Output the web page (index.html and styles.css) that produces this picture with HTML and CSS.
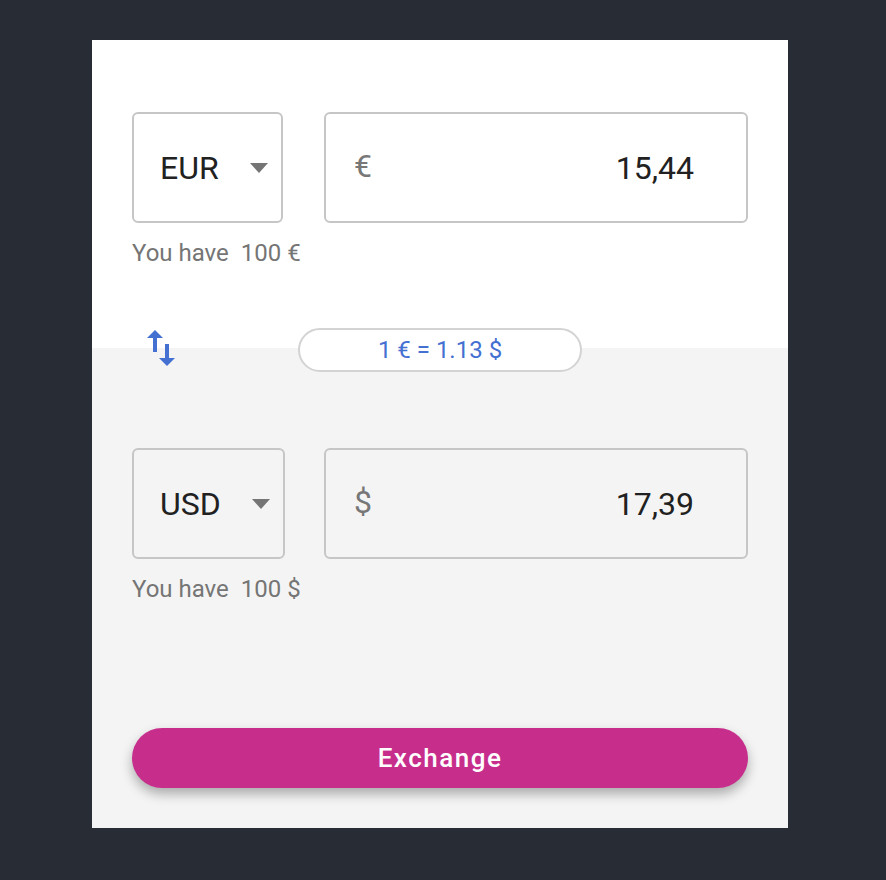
FILE: index.html
```html
<!DOCTYPE html>
<html>
<head>
<meta charset="utf-8">
<link rel="stylesheet" href="styles.css">
</head>
<body>
<div class="card">
  <div class="row">
    <div class="select"><span class="code">EUR</span><span class="caret"></span></div>
    <div class="amount"><span class="sym">€</span><span class="val">15,44</span></div>
  </div>
  <div class="balance">You have&nbsp; 100 €</div>

  <div class="rate-row">
    <svg class="swap" viewBox="0 0 24 24" width="48" height="48"><path fill="currentColor" d="M16 17.01V10h-2v7.01h-3L15 21l4-3.99h-3zM9 3L5 6.99h3V14h2V6.99h3L9 3z"/></svg>
    <div class="rate">1 € = 1.13 $</div>
  </div>

  <div class="row row2">
    <div class="select"><span class="code">USD</span><span class="caret"></span></div>
    <div class="amount"><span class="sym">$</span><span class="val">17,39</span></div>
  </div>
  <div class="balance">You have&nbsp; 100 $</div>

  <button class="exchange">Exchange</button>
</div>
</body>
</html>
```

FILE: styles.css
```css
html, body {
  margin: 0;
  padding: 0;
  background: #282c34;
  font-family: Roboto, "Noto Sans", sans-serif;
}
body {
  padding: 40px 0 0 92px;
  height: 880px;
  box-sizing: border-box;
}
.card {
  width: 696px;
  height: 788px;
  box-sizing: border-box;
  padding: 72px 40px 40px;
  background: linear-gradient(#ffffff 0, #ffffff 308px, #f4f4f4 308px);
  display: flex;
  flex-direction: column;
}
.row {
  display: flex;
  height: 111px;
}
.select {
  display: inline-flex;
  align-items: center;
  box-sizing: border-box;
  height: 111px;
  border: 2px solid #c6c6c6;
  border-radius: 6px;
  padding: 0 13px 0 26px;
}
.code {
  font-size: 32px;
  color: #212121;
  margin-right: 31px;
}
.caret {
  width: 0;
  height: 0;
  border-left: 9px solid transparent;
  border-right: 9px solid transparent;
  border-top: 10px solid #757575;
}
.amount {
  flex: 0 0 424px;
  margin-left: auto;
  display: flex;
  align-items: center;
  justify-content: space-between;
  box-sizing: border-box;
  height: 111px;
  border: 2px solid #c6c6c6;
  border-radius: 6px;
  padding: 0 52px 0 28px;
}
.sym {
  font-size: 32px;
  color: #777777;
  margin-top: -4px;
}
.val {
  font-size: 32px;
  color: #212121;
}
.balance {
  margin-top: 16px;
  font-size: 24px;
  color: #757575;
}
.rate-row {
  display: grid;
  grid-template-columns: 1fr auto 1fr;
  align-items: center;
  margin-top: 57px;
  height: 48px;
}
.swap {
  color: #4470d2;
  margin-left: 5px;
}
.rate {
  box-sizing: border-box;
  width: 284px;
  height: 44px;
  margin-top: 4px;
  border: 2px solid #d3d3d3;
  border-radius: 22px;
  background: #fff;
  color: #4470d2;
  font-size: 24px;
  display: flex;
  align-items: center;
  justify-content: center;
}
.row2 {
  margin-top: 76px;
}
.exchange {
  margin-top: auto;
  height: 60px;
  border: none;
  border-radius: 30px;
  background: #c72e8c;
  color: #fff;
  font-family: Roboto, sans-serif;
  font-size: 26px;
  font-weight: 500;
  letter-spacing: 1.5px;
  box-shadow: 0 6px 12px rgba(0, 0, 0, 0.3);
}
```
